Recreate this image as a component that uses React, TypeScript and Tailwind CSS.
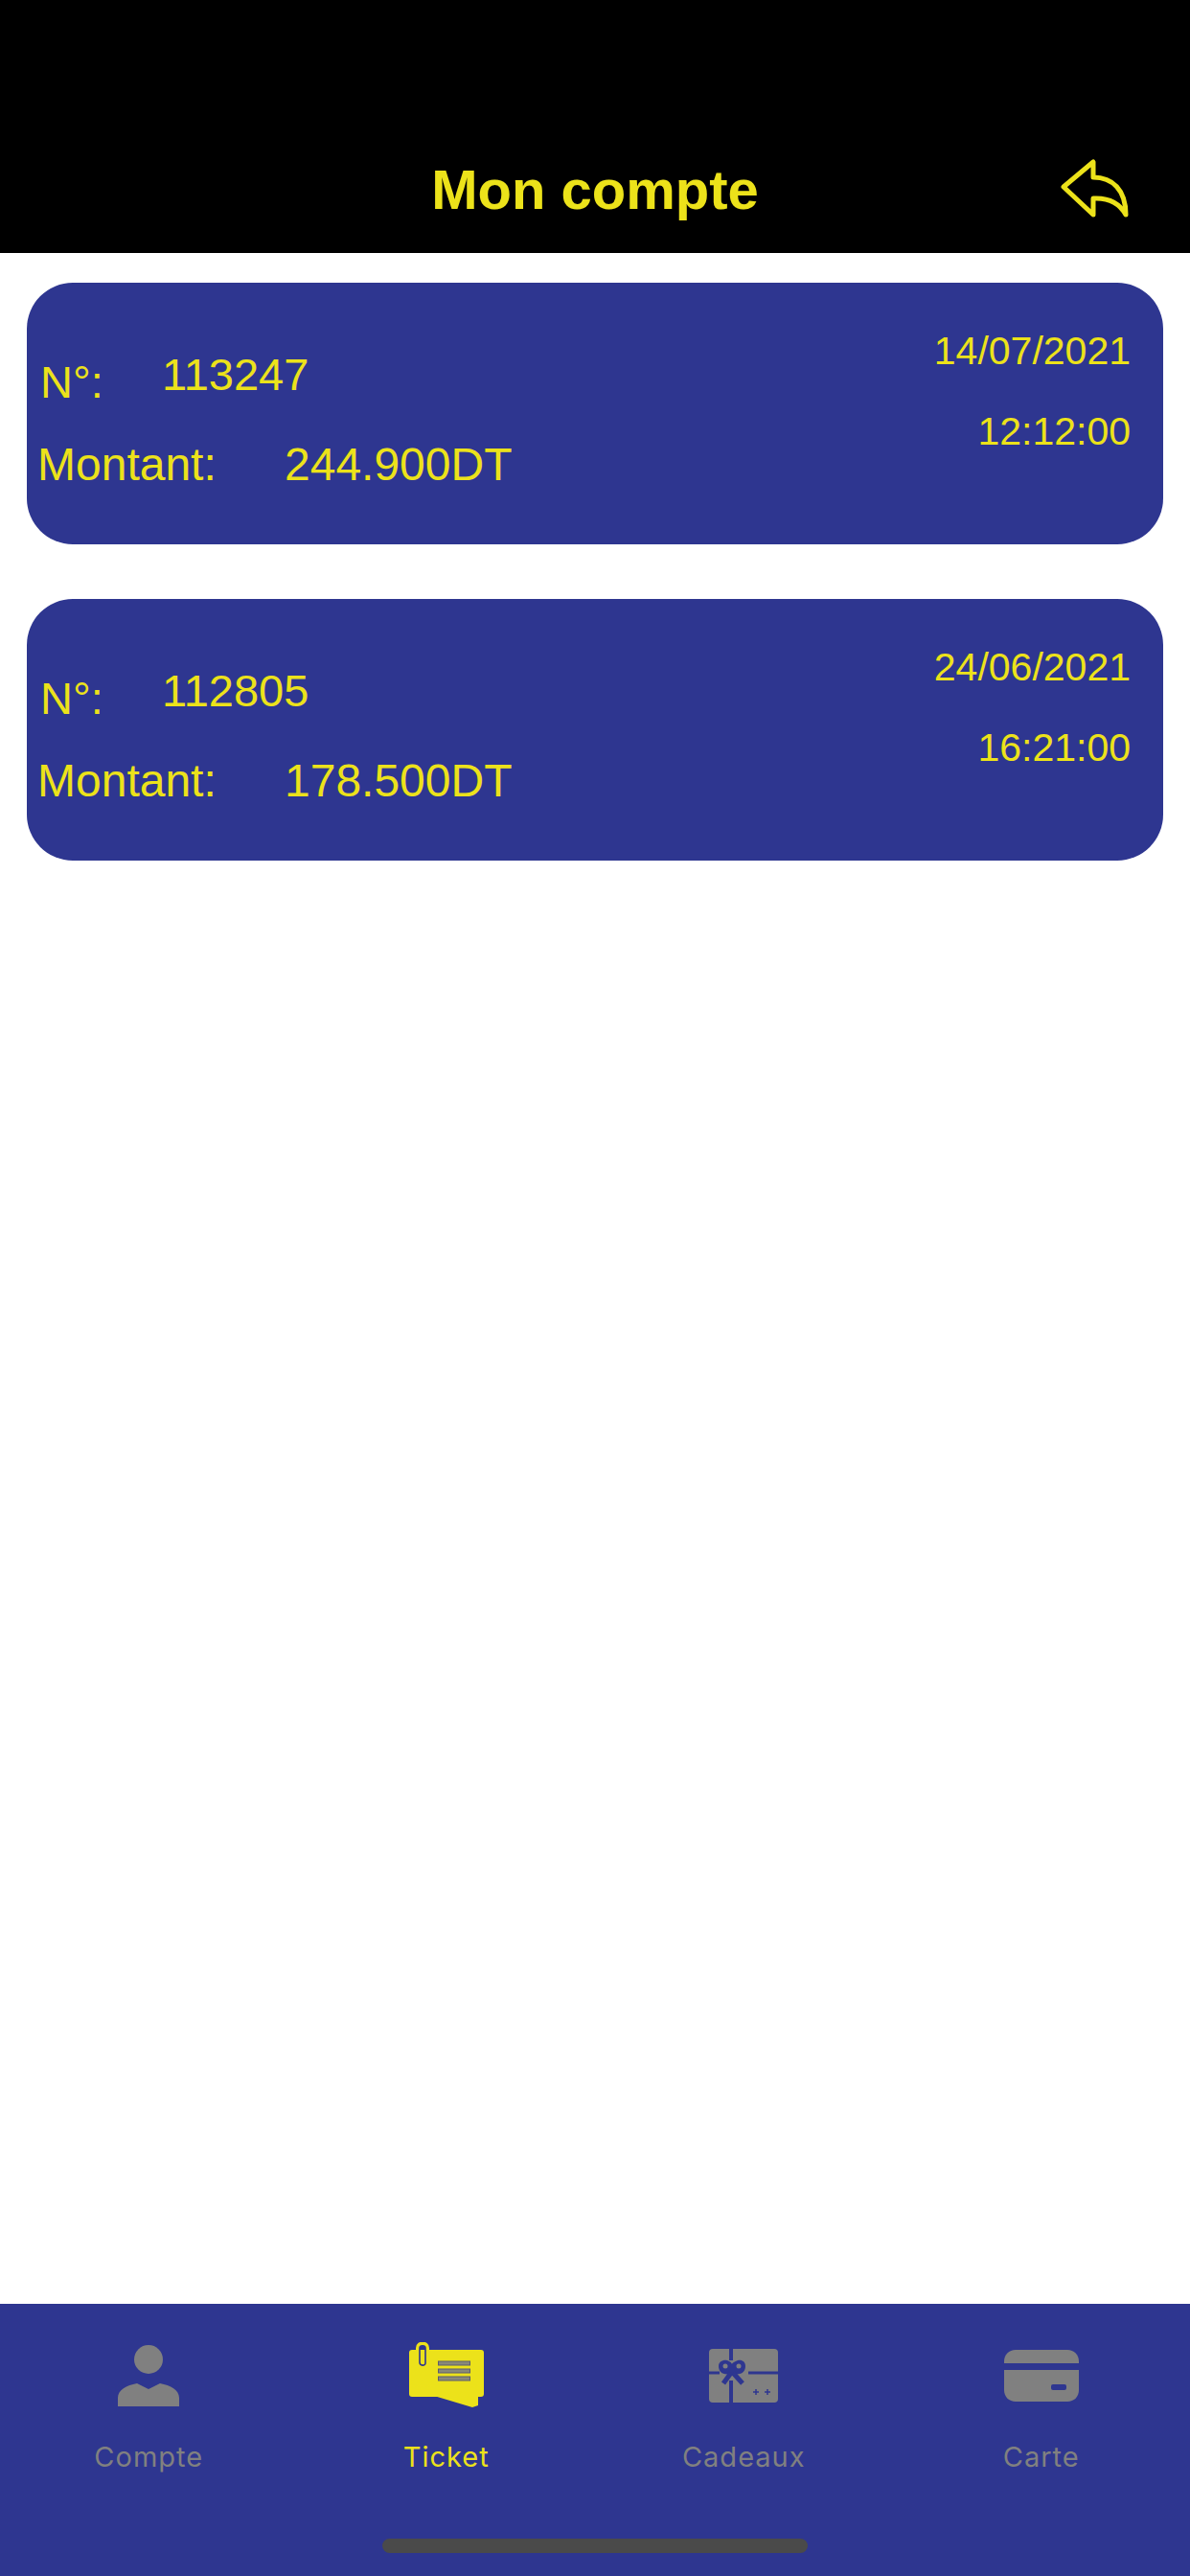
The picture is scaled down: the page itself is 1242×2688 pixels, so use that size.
const tickets = [
  { no: "113247", amount: "244.900DT", date: "14/07/2021", time: "12:12:00" },
  { no: "112805", amount: "178.500DT", date: "24/06/2021", time: "16:21:00" },
]

function BackIcon() {
  return (
    <svg width="74" height="64" viewBox="0 0 74 64" fill="none" stroke="#ece21a" strokeWidth="5" strokeLinejoin="round" strokeLinecap="round">
      <path d="M3 29 L34 3 V19 C54 19 68 32 68 58 C62 47 52 40 34 41 V58 Z" />
    </svg>
  )
}

function PersonIcon() {
  return (
    <svg width="66" height="68" viewBox="0 0 66 68" fill="#808080" className="blur-[0.6px]">
      <circle cx="33" cy="18" r="15" />
      <path d="M1 67 V58 C1 50 10 45 21 43 L33 49 L45 43 C56 45 65 50 65 58 V67 Z" />
    </svg>
  )
}

function TicketIcon() {
  return (
    <svg width="80" height="68" viewBox="0 0 80 68" className="blur-[0.4px]">
      <path d="M27 56 H73 V66 L67 68 Z" fill="#ece21a" />
      <rect x="1" y="8" width="78" height="49" rx="3" fill="#ece21a" />
      <path d="M10 22 V6 C10 0 20 0 20 6 V22 C20 27 11 27 11 22" fill="none" stroke="#ece21a" strokeWidth="4" />
      <path d="M12 21 V6 C12 3 18 3 18 6 V22 C18 25 12 25 12 21" fill="none" stroke="#2e3690" strokeWidth="1.6" />
      <path d="M31 22 H65 M31 30 H65 M31 38 H65" stroke="#5c5c6e" strokeWidth="5" />
      <path d="M32 22 H64 M32 30 H64 M32 38 H64" stroke="#8a8a78" strokeWidth="3" />
    </svg>
  )
}

function GiftIcon() {
  return (
    <svg width="74" height="68" viewBox="0 0 74 68" className="blur-[0.6px]">
      <rect x="1" y="7" width="72" height="56" rx="4" fill="#808080" />
      <path d="M24 6 V19 M24 40 V64" stroke="#2e3690" strokeWidth="4" />
      <path d="M0 32 H12 M42 32 H74" stroke="#2e3690" strokeWidth="3" />
      <path d="M25 33 C14 35 11 30 11 25 C11 20 16 18 20 19 C23 20 25 22 25 23 C25 22 28 20 31 19 C35 18 39 20 39 25 C39 30 36 35 25 33 Z" fill="#2e3690" />
      <path d="M24 32 L16 43 M26 32 L36 43" stroke="#2e3690" strokeWidth="5" />
      <circle cx="18" cy="25" r="2.5" fill="#808080" />
      <circle cx="32" cy="25" r="2.5" fill="#808080" />
      <path d="M47 52 H53 M50 49 V55 M59 52 H65 M62 49 V55" stroke="#2e3690" strokeWidth="1.5" />
    </svg>
  )
}

function CardIcon() {
  return (
    <svg width="80" height="68" viewBox="0 0 80 68" className="blur-[0.6px]">
      <path d="M1 22 V20 C1 13 6 8 13 8 H67 C74 8 79 13 79 20 V22 Z" fill="#808080" />
      <path d="M1 29 H79 V50 C79 57 74 62 67 62 H13 C6 62 1 57 1 50 Z" fill="#808080" />
      <rect x="50" y="44" width="16" height="6" rx="2" fill="#2e3690" />
    </svg>
  )
}

const tabs = [
  { label: "Compte", icon: <PersonIcon />, active: false },
  { label: "Ticket", icon: <TicketIcon />, active: true },
  { label: "Cadeaux", icon: <GiftIcon />, active: false },
  { label: "Carte", icon: <CardIcon />, active: false },
]

export default function App() {
  return (
    <div className="w-[1242px] h-[2688px] flex flex-col bg-white font-['Liberation_Sans',Arial,sans-serif] text-[#ece21a] overflow-hidden">
      <header className="h-[264px] shrink-0 bg-black grid grid-cols-[1fr_auto_1fr] items-center pt-[132px] pb-[1px]">
        <div />
        <h1 className="text-[58px] leading-none font-bold">Mon compte</h1>
        <div className="justify-self-end mr-[61px] mt-[1px]">
          <BackIcon />
        </div>
      </header>

      <main className="flex-1 px-[28px] pt-[31px] flex flex-col gap-[57px]">
        {tickets.map((t) => (
          <div key={t.no} className="h-[273px] bg-[#2e3690] rounded-[48px] flex justify-between pl-[11px] pr-[34px]">
            <div className="flex flex-col pt-[72px]">
              <div className="flex h-[66px]">
                <span className="text-[47px] leading-none ml-[3px] mt-[8px] w-[127px]">N°:</span>
                <span className="text-[47px] leading-none">{t.no}</span>
              </div>
              <div className="flex mt-[28px]">
                <span className="text-[48px] leading-none w-[258px]">Montant:</span>
                <span className="text-[48px] leading-none">{t.amount}</span>
              </div>
            </div>
            <div className="flex flex-col items-end pt-[51px] gap-[43px]">
              <span className="text-[41px] leading-none">{t.date}</span>
              <span className="text-[41px] leading-none">{t.time}</span>
            </div>
          </div>
        ))}
      </main>

      <nav className="h-[284px] shrink-0 bg-[#2e3690] flex flex-col items-center">
        <div className="w-full grid grid-cols-4 pt-[40px]">
          {tabs.map((tab) => (
            <div key={tab.label} className="flex flex-col items-center">
              <div className="h-[68px] flex items-center justify-center">{tab.icon}</div>
              <span
                className={`mt-[35px] font-['Inter',sans-serif] text-[29px] leading-[34px] tracking-[1px] ${
                  tab.active ? "text-[#ece21a]" : "text-[#808080]"
                }`}
              >
                {tab.label}
              </span>
            </div>
          ))}
        </div>
        <div className="mt-[68px] w-[444px] h-[15px] rounded-full bg-[#4a4a4a]" />
      </nav>
    </div>
  )
}
